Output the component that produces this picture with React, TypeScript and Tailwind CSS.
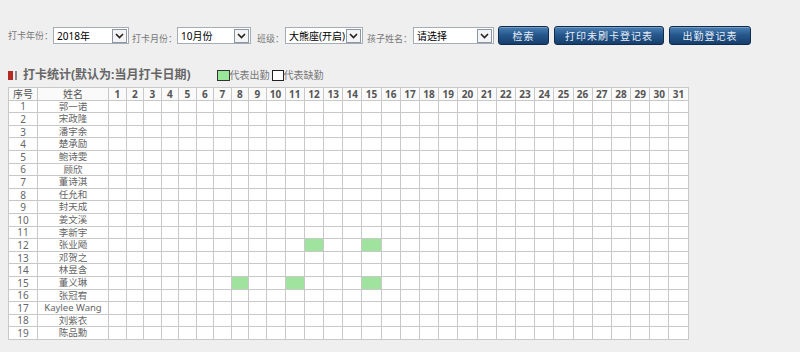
import React from 'react'

const names = [
  '郭一诺', '宋政隆', '潘宇余', '楚承励', '鲍诗雯', '顾欣', '董诗淇', '任允和', '封天成', '姜文溪',
  '李新宇', '张业飏', '邓贺之', '林昱含', '董义琳', '张冠宥', 'Kaylee Wang', '刘紫衣', '陈品勳',
]

const days = Array.from({ length: 31 }, (_, i) => i + 1)

// row number -> days with attendance
const present: Record<number, number[]> = { 12: [12, 15], 15: [8, 11, 15] }

const font = { fontFamily: '"Noto Sans", "Noto Sans CJK SC", sans-serif' }

function Select({ value, width }: { value: string; width: string }) {
  return (
    <div className={`${width} h-[17px] bg-white border border-[#a5acb5] flex items-center justify-between pl-[3px] pr-px`}>
      <span className="text-[10px] text-black leading-none whitespace-nowrap">{value}</span>
      <div className="w-[15px] h-[14px] border border-[#8c97a5] bg-[#f4f4f4] flex items-center justify-center">
        <svg width="9" height="6" viewBox="0 0 9 6">
          <path d="M1 1 L4.5 4.5 L8 1" fill="none" stroke="#222" strokeWidth="1.6" />
        </svg>
      </div>
    </div>
  )
}

function Label({ children }: { children: React.ReactNode }) {
  return <span className="text-[9px] text-[#777] leading-none whitespace-nowrap">{children}</span>
}

function Btn({ children, width }: { children: React.ReactNode; width: string }) {
  return (
    <button
      className={`${width} h-[19px] rounded-[3px] border border-[#0f2c4c] bg-gradient-to-b from-[#4a7fb4] via-[#24558a] to-[#183f6b] text-[10px] text-[#e6eef8] tracking-[1px] leading-none flex items-center justify-center shadow-[inset_0_1px_0_rgba(255,255,255,0.25)]`}
    >
      {children}
    </button>
  )
}

export default function App() {
  return (
    <div className="w-[800px] h-[352px] bg-[#efefef] overflow-hidden" style={font}>
      {/* Search bar */}
      <div className="flex items-center pt-[26px] pl-[8px] h-[45px]">
        <Label>打卡年份：</Label>
        <Select value="2018年" width="w-[76px]" />
        <div className="ml-[3px]"><Label>打卡月份：</Label></div>
        <Select value="10月份" width="w-[74px]" />
        <div className="ml-[6px]"><Label>班级：</Label></div>
        <div className="ml-[1px]"><Select value="大熊座(开启)" width="w-[78px]" /></div>
        <div className="ml-[4px]"><Label>孩子姓名：</Label></div>
        <div className="ml-[1px]"><Select value="请选择" width="w-[81px]" /></div>
        <div className="ml-[4px] flex gap-[5px]">
          <Btn width="w-[51px]">检索</Btn>
          <Btn width="w-[110px]">打印未刷卡登记表</Btn>
          <Btn width="w-[82px]">出勤登记表</Btn>
        </div>
      </div>

      {/* Title + legend */}
      <div className="flex items-center mt-[23px] pl-[8px] h-[14px]">
        <div className="w-[5px] h-[9px] bg-[#b52a24]" />
        <div className="w-[2px] h-[9px] bg-[#8a8a8a] ml-[2px]" />
        <span className="ml-[6px] text-[12px] font-bold text-[#666] leading-none whitespace-nowrap">
          打卡统计(默认为:当月打卡日期)
        </span>
        <div className="ml-[26px] w-[13px] h-[11px] bg-[#98e698] border border-[#333]" />
        <span className="text-[10px] text-[#777] leading-none">代表出勤</span>
        <div className="ml-[2px] w-[12px] h-[11px] bg-white border border-[#222]" />
        <span className="text-[10px] text-[#777] leading-none">代表缺勤</span>
      </div>

      {/* Attendance grid */}
      <div className="ml-[8px] mt-[5px] w-max grid grid-cols-[28px_70px_repeat(9,16.5px)_repeat(22,18.2px)] auto-rows-[11.6px] gap-px p-px bg-[#c8c8c8]">
        <div className="bg-[#fafafa] flex items-center justify-center text-[10px] text-[#555] leading-none">序号</div>
        <div className="bg-[#fafafa] flex items-center justify-center text-[10px] text-[#555] leading-none">姓名</div>
        {days.map(d => (
          <div key={d} className="bg-[#fafafa] flex items-center justify-center text-[10px] font-bold text-[#555] leading-none">
            {d}
          </div>
        ))}
        {names.map((name, i) => {
          const row = i + 1
          const on = present[row] || []
          return (
            <React.Fragment key={row}>
              <div className="bg-white flex items-center justify-center text-[10px] text-[#666] leading-none">{row}</div>
              <div className="bg-white flex items-center justify-center text-[9.5px] text-[#666] leading-none whitespace-nowrap">{name}</div>
              {days.map(d => (
                <div key={d} className={on.includes(d) ? 'bg-[#9fe39f]' : 'bg-white'} />
              ))}
            </React.Fragment>
          )
        })}
      </div>
    </div>
  )
}
